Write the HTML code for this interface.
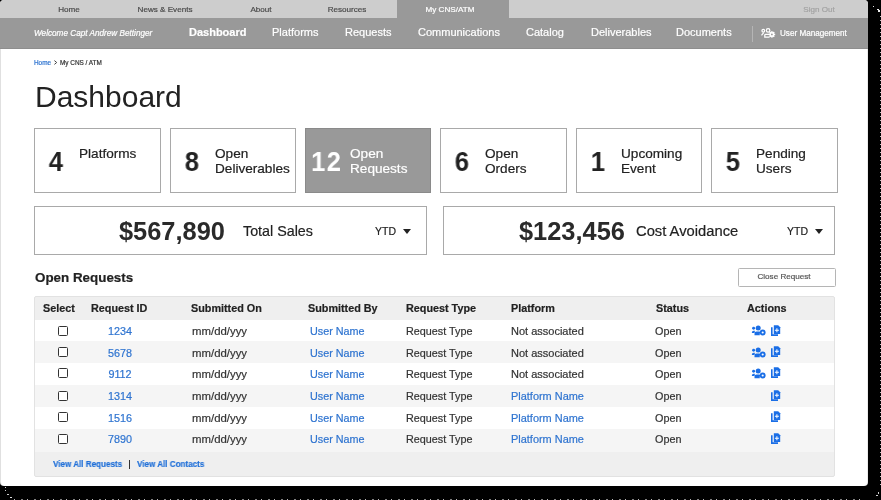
<!DOCTYPE html><html><head><meta charset="utf-8"><style>
html,body{margin:0;padding:0;width:881px;height:500px;overflow:hidden;background:#000}
.page{position:absolute;left:0;top:0;width:868px;height:486px;background:#fff;border-radius:4px;overflow:hidden;box-shadow:inset 1px 0 0 rgba(0,0,0,0.12),inset -1px 0 0 rgba(0,0,0,0.08);font-family:"Liberation Sans",sans-serif}
.t{position:absolute;white-space:nowrap;line-height:1;will-change:transform;-webkit-text-stroke:0.2px currentColor}
.nz{position:absolute}
</style></head><body>
<div class="nz" style="left:880px;top:16px;width:1px;height:470px;background:repeating-linear-gradient(180deg,rgba(255,255,255,0.75) 0 1px,transparent 1px 4px)"></div>
<div class="nz" style="left:14px;top:499px;width:850px;height:1px;background:repeating-linear-gradient(90deg,rgba(255,255,255,0.7) 0 1px,transparent 1px 7px,rgba(255,255,255,0.5) 7px 9px,transparent 9px 13px)"></div>
<div class="nz" style="left:873px;top:6px;width:1px;height:1px;background:#ddd"></div>
<div class="nz" style="left:877px;top:9px;width:2px;height:1px;background:#eee"></div>
<div class="nz" style="left:878px;top:10px;width:2px;height:2px;background:#eee"></div>
<div class="nz" style="left:5px;top:487px;width:1px;height:1px;background:#ddd"></div>
<div class="nz" style="left:5px;top:490px;width:1px;height:1px;background:#ccc"></div>
<div class="nz" style="left:7px;top:494px;width:2px;height:1px;background:#ccc"></div>
<div class="nz" style="left:10px;top:497px;width:2px;height:1px;background:#ddd"></div>
<div class="nz" style="left:876px;top:495px;width:2px;height:1px;background:#ccc"></div>
<div class="nz" style="left:878px;top:492px;width:1px;height:2px;background:#ccc"></div>
<div class="page">
<div style="position:absolute;left:0px;top:0px;width:868px;height:18px;background:#cdcdcd"></div>
<div style="position:absolute;left:396.5px;top:0px;width:112.5px;height:18px;background:#999"></div>
<div class="t" style="left:-130.6px;width:400px;text-align:center;top:6.00px;font-size:8.1px;color:#4a4a4a;font-weight:normal;font-style:normal;">Home</div>
<div class="t" style="left:-35.099999999999994px;width:400px;text-align:center;top:6.00px;font-size:8.1px;color:#4a4a4a;font-weight:normal;font-style:normal;">News &amp; Events</div>
<div class="t" style="left:61.30000000000001px;width:400px;text-align:center;top:6.00px;font-size:8.1px;color:#4a4a4a;font-weight:normal;font-style:normal;">About</div>
<div class="t" style="left:146.7px;width:400px;text-align:center;top:6.00px;font-size:8.1px;color:#4a4a4a;font-weight:normal;font-style:normal;">Resources</div>
<div class="t" style="left:250.2px;width:400px;text-align:center;top:6.00px;font-size:8.1px;color:#fff;font-weight:normal;font-style:normal;">My CNS/ATM</div>
<div class="t" style="left:618.8px;width:400px;text-align:center;top:6.00px;font-size:8.1px;color:#a2a2a2;font-weight:normal;font-style:normal;">Sign Out</div>
<div style="position:absolute;left:0px;top:18px;width:868px;height:30.5px;background:#999"></div>
<div style="position:absolute;left:0px;top:48px;width:868px;height:1px;background:#8e8e8e"></div>
<div class="t" style="left:33.6px;top:30.00px;font-size:8.2px;color:#fff;font-weight:normal;font-style:italic;">Welcome Capt Andrew Bettinger</div>
<div class="t" style="left:189.3px;top:27.00px;font-size:11px;color:#fff;font-weight:bold;font-style:normal;">Dashboard</div>
<div class="t" style="left:272.2px;top:27.00px;font-size:11px;color:#fff;font-weight:normal;font-style:normal;">Platforms</div>
<div class="t" style="left:345px;top:27.00px;font-size:11px;color:#fff;font-weight:normal;font-style:normal;">Requests</div>
<div class="t" style="left:417.8px;top:27.00px;font-size:11px;color:#fff;font-weight:normal;font-style:normal;">Communications</div>
<div class="t" style="left:526px;top:27.00px;font-size:11px;color:#fff;font-weight:normal;font-style:normal;">Catalog</div>
<div class="t" style="left:590.6px;top:27.00px;font-size:11px;color:#fff;font-weight:normal;font-style:normal;">Deliverables</div>
<div class="t" style="left:676.2px;top:27.00px;font-size:11px;color:#fff;font-weight:normal;font-style:normal;">Documents</div>
<div style="position:absolute;left:751.5px;top:26px;width:1px;height:16px;background:#b5b5b5"></div>
<div class="t" style="left:779.7px;top:30.00px;font-size:8.15px;color:#fff;font-weight:normal;font-style:normal;">User Management</div>
<svg style="position:absolute;left:761px;top:27px" width="15" height="12" viewBox="0 0 15 12"><g fill="none" stroke="#fff" stroke-width="1.25"><circle cx="2.3" cy="3.7" r="1.35"/><path d="M0.5 8.3 L2.7 5.7"/><circle cx="7.1" cy="3.4" r="1.75"/><path d="M8.4 7.4 H4.6 Q3.8 7.4 3.8 8.2 V10.2 H8.6"/></g><g fill="#fff"><circle cx="10.9" cy="7.4" r="2.5"/><rect x="10.2" y="4.1" width="1.4" height="6.6" /><rect x="7.6" y="6.7" width="6.6" height="1.4"/><rect x="10.2" y="4.1" width="1.4" height="6.6" transform="rotate(45 10.9 7.4)"/><rect x="10.2" y="4.1" width="1.4" height="6.6" transform="rotate(-45 10.9 7.4)"/></g><circle cx="10.9" cy="7.4" r="0.9" fill="#999"/></svg>
<div class="t" style="left:34px;top:60.00px;font-size:6.4px;color:#2f74d0;font-weight:normal;font-style:normal;">Home</div>
<svg style="position:absolute;left:53px;top:59px" width="6" height="7" viewBox="0 0 6 7"><path d="M1.4 1.6 L3.7 3.5 L1.4 5.4" fill="none" stroke="#444" stroke-width="1"/></svg>
<div class="t" style="left:60px;top:60.00px;font-size:6.4px;color:#333;font-weight:normal;font-style:normal;">My CNS / ATM</div>
<div class="t" style="left:35px;top:82.00px;font-size:30px;color:#222;font-weight:normal;font-style:normal;-webkit-text-stroke:0;">Dashboard</div>
<div style="position:absolute;left:34px;top:128px;width:127px;height:65px;box-sizing:border-box;border:1px solid #a9a9a9;background:#fff"></div>
<div class="t" style="left:-144.5px;width:400px;text-align:center;top:148.00px;font-size:27.5px;color:#222;font-weight:bold;font-style:normal;transform:scaleX(0.93);-webkit-text-stroke:0;">4</div>
<div class="t" style="left:79.3px;top:147.00px;font-size:13.6px;color:#222;font-weight:normal;font-style:normal;">Platforms</div>
<div style="position:absolute;left:170px;top:128px;width:126px;height:65px;box-sizing:border-box;border:1px solid #a9a9a9;background:#fff"></div>
<div class="t" style="left:-8.5px;width:400px;text-align:center;top:148.00px;font-size:27.5px;color:#222;font-weight:bold;font-style:normal;transform:scaleX(0.93);-webkit-text-stroke:0;">8</div>
<div class="t" style="left:215.3px;top:147.00px;font-size:13.6px;color:#222;font-weight:normal;font-style:normal;">Open</div>
<div class="t" style="left:215.3px;top:162.00px;font-size:13.6px;color:#222;font-weight:normal;font-style:normal;">Deliverables</div>
<div style="position:absolute;left:305px;top:128px;width:126px;height:65px;box-sizing:border-box;border:1px solid #8a8a8a;background:#999"></div>
<div class="t" style="left:125.60000000000002px;width:400px;text-align:center;top:148.00px;font-size:27.5px;color:#fff;font-weight:bold;font-style:normal;transform:scaleX(0.93);letter-spacing:1.3px;text-indent:1.3px;-webkit-text-stroke:0;">12</div>
<div class="t" style="left:350.3px;top:147.00px;font-size:13.6px;color:#fff;font-weight:normal;font-style:normal;">Open</div>
<div class="t" style="left:350.3px;top:162.00px;font-size:13.6px;color:#fff;font-weight:normal;font-style:normal;">Requests</div>
<div style="position:absolute;left:440px;top:128px;width:127px;height:65px;box-sizing:border-box;border:1px solid #a9a9a9;background:#fff"></div>
<div class="t" style="left:261.5px;width:400px;text-align:center;top:148.00px;font-size:27.5px;color:#222;font-weight:bold;font-style:normal;transform:scaleX(0.93);-webkit-text-stroke:0;">6</div>
<div class="t" style="left:485.3px;top:147.00px;font-size:13.6px;color:#222;font-weight:normal;font-style:normal;">Open</div>
<div class="t" style="left:485.3px;top:162.00px;font-size:13.6px;color:#222;font-weight:normal;font-style:normal;">Orders</div>
<div style="position:absolute;left:576px;top:128px;width:126px;height:65px;box-sizing:border-box;border:1px solid #a9a9a9;background:#fff"></div>
<div class="t" style="left:397.5px;width:400px;text-align:center;top:148.00px;font-size:27.5px;color:#222;font-weight:bold;font-style:normal;transform:scaleX(0.93);-webkit-text-stroke:0;">1</div>
<div class="t" style="left:621.3px;top:147.00px;font-size:13.6px;color:#222;font-weight:normal;font-style:normal;">Upcoming</div>
<div class="t" style="left:621.3px;top:162.00px;font-size:13.6px;color:#222;font-weight:normal;font-style:normal;">Event</div>
<div style="position:absolute;left:711px;top:128px;width:127px;height:65px;box-sizing:border-box;border:1px solid #a9a9a9;background:#fff"></div>
<div class="t" style="left:532.5px;width:400px;text-align:center;top:148.00px;font-size:27.5px;color:#222;font-weight:bold;font-style:normal;transform:scaleX(0.93);-webkit-text-stroke:0;">5</div>
<div class="t" style="left:756.3px;top:147.00px;font-size:13.6px;color:#222;font-weight:normal;font-style:normal;">Pending</div>
<div class="t" style="left:756.3px;top:162.00px;font-size:13.6px;color:#222;font-weight:normal;font-style:normal;">Users</div>
<div style="position:absolute;left:34px;top:206px;width:393px;height:48.5px;box-sizing:border-box;border:1px solid #a9a9a9;background:#fff"></div>
<div class="t" style="left:118.6px;top:219.00px;font-size:25.4px;color:#2a2a2a;font-weight:bold;font-style:normal;-webkit-text-stroke:0;">$567,890</div>
<div class="t" style="left:243px;top:224.00px;font-size:14.3px;color:#222;font-weight:normal;font-style:normal;">Total Sales</div>
<div class="t" style="left:375.1px;top:226.00px;font-size:10.5px;color:#222;font-weight:normal;font-style:normal;">YTD</div>
<div style="position:absolute;left:403px;top:229px;width:0;height:0;border-left:4.2px solid transparent;border-right:4.2px solid transparent;border-top:5px solid #222"></div>
<div style="position:absolute;left:443px;top:206px;width:392px;height:48.5px;box-sizing:border-box;border:1px solid #a9a9a9;background:#fff"></div>
<div class="t" style="left:518.7px;top:219.00px;font-size:25.4px;color:#2a2a2a;font-weight:bold;font-style:normal;-webkit-text-stroke:0;">$123,456</div>
<div class="t" style="left:636.4px;top:224.00px;font-size:14.75px;color:#222;font-weight:normal;font-style:normal;">Cost Avoidance</div>
<div class="t" style="left:787.3px;top:226.00px;font-size:10.5px;color:#222;font-weight:normal;font-style:normal;">YTD</div>
<div style="position:absolute;left:814.8px;top:229px;width:0;height:0;border-left:4.2px solid transparent;border-right:4.2px solid transparent;border-top:5px solid #222"></div>
<div class="t" style="left:34.9px;top:271.00px;font-size:13.4px;color:#222;font-weight:bold;font-style:normal;">Open Requests</div>
<div style="position:absolute;left:738px;top:268px;width:98px;height:18.5px;box-sizing:border-box;border:1px solid #b5b5b5;border-radius:1.5px;background:#fff"></div>
<div class="t" style="left:584.3px;width:400px;text-align:center;top:273.00px;font-size:8.1px;color:#555;font-weight:normal;font-style:normal;">Close Request</div>
<div style="position:absolute;left:34px;top:296px;width:801px;height:181px;box-sizing:border-box;border:1px solid #e2e2e2;border-radius:2px;background:#efefef"></div>
<div class="t" style="left:43.4px;top:303.00px;font-size:10.8px;color:#222;font-weight:bold;font-style:normal;">Select</div>
<div class="t" style="left:90.7px;top:303.00px;font-size:10.8px;color:#222;font-weight:bold;font-style:normal;">Request ID</div>
<div class="t" style="left:190.5px;top:303.00px;font-size:10.8px;color:#222;font-weight:bold;font-style:normal;">Submitted On</div>
<div class="t" style="left:307.8px;top:303.00px;font-size:10.8px;color:#222;font-weight:bold;font-style:normal;">Submitted By</div>
<div class="t" style="left:405.5px;top:303.00px;font-size:10.8px;color:#222;font-weight:bold;font-style:normal;">Request Type</div>
<div class="t" style="left:511.1px;top:303.00px;font-size:10.8px;color:#222;font-weight:bold;font-style:normal;">Platform</div>
<div class="t" style="left:655.5px;top:303.00px;font-size:10.8px;color:#222;font-weight:bold;font-style:normal;">Status</div>
<div class="t" style="left:747.4px;top:303.00px;font-size:10.8px;color:#222;font-weight:bold;font-style:normal;">Actions</div>
<div style="position:absolute;left:35px;top:320px;width:799px;height:21px;background:#fff"></div>
<div style="position:absolute;left:57.6px;top:326.0px;width:10px;height:10px;box-sizing:border-box;border:1.5px solid #333;border-radius:1.5px;background:#fff"></div>
<div class="t" style="left:-80.5px;width:400px;text-align:center;top:326.00px;font-size:10.8px;color:#2f74d0;font-weight:normal;font-style:normal;">1234</div>
<div class="t" style="left:191.7px;top:326.00px;font-size:11.4px;color:#333;font-weight:normal;font-style:normal;">mm/dd/yyy</div>
<div class="t" style="left:310.3px;top:326.00px;font-size:10.8px;color:#2f74d0;font-weight:normal;font-style:normal;">User Name</div>
<div class="t" style="left:406.2px;top:326.00px;font-size:10.8px;color:#333;font-weight:normal;font-style:normal;">Request Type</div>
<div class="t" style="left:510.9px;top:326.00px;font-size:11px;color:#333;font-weight:normal;font-style:normal;">Not associated</div>
<div class="t" style="left:655px;top:326.00px;font-size:10.8px;color:#333;font-weight:normal;font-style:normal;">Open</div>
<svg style="position:absolute;left:751px;top:325.3px" width="16" height="12" viewBox="0 0 16 12"><g fill="#1a6ee6"><circle cx="2.6" cy="3.3" r="1.45"/><path d="M0.9 7.6 Q0.9 5.7 2.6 5.7 H3.9 L3.6 8 H0.9Z"/><circle cx="7.2" cy="2.9" r="2.5"/><path d="M3.5 10.3 V8.4 Q3.5 6.6 5.5 6.6 H8.2 Q9.3 6.6 9.2 7.5 Q8.5 8.6 8.8 10.3Z"/><circle cx="11.7" cy="7.5" r="2.9"/></g><circle cx="11.7" cy="7.5" r="1.05" fill="#fff"/></svg>
<svg style="position:absolute;left:770px;top:325.0px" width="12" height="12" viewBox="0 0 12 12"><g fill="#1a6ee6"><path d="M1 2.2 H2.6 V9.3 H8 V11 H1Z"/><path d="M3.8 0.2 H8.2 L10.2 2.2 V9 H3.8Z"/></g><path d="M6.4 3.3 H7.4 V4.8 H8.9 V5.8 H7.4 V7.3 H6.4 V5.8 H4.9 V4.8 H6.4Z" fill="#fff"/></svg>
<div style="position:absolute;left:35px;top:341px;width:799px;height:22px;background:#f5f5f5"></div>
<div style="position:absolute;left:57.6px;top:347.4px;width:10px;height:10px;box-sizing:border-box;border:1.5px solid #333;border-radius:1.5px;background:#fff"></div>
<div class="t" style="left:-80.5px;width:400px;text-align:center;top:348.00px;font-size:10.8px;color:#2f74d0;font-weight:normal;font-style:normal;">5678</div>
<div class="t" style="left:191.7px;top:348.00px;font-size:11.4px;color:#333;font-weight:normal;font-style:normal;">mm/dd/yyy</div>
<div class="t" style="left:310.3px;top:348.00px;font-size:10.8px;color:#2f74d0;font-weight:normal;font-style:normal;">User Name</div>
<div class="t" style="left:406.2px;top:348.00px;font-size:10.8px;color:#333;font-weight:normal;font-style:normal;">Request Type</div>
<div class="t" style="left:510.9px;top:348.00px;font-size:11px;color:#333;font-weight:normal;font-style:normal;">Not associated</div>
<div class="t" style="left:655px;top:348.00px;font-size:10.8px;color:#333;font-weight:normal;font-style:normal;">Open</div>
<svg style="position:absolute;left:751px;top:346.7px" width="16" height="12" viewBox="0 0 16 12"><g fill="#1a6ee6"><circle cx="2.6" cy="3.3" r="1.45"/><path d="M0.9 7.6 Q0.9 5.7 2.6 5.7 H3.9 L3.6 8 H0.9Z"/><circle cx="7.2" cy="2.9" r="2.5"/><path d="M3.5 10.3 V8.4 Q3.5 6.6 5.5 6.6 H8.2 Q9.3 6.6 9.2 7.5 Q8.5 8.6 8.8 10.3Z"/><circle cx="11.7" cy="7.5" r="2.9"/></g><circle cx="11.7" cy="7.5" r="1.05" fill="#fff"/></svg>
<svg style="position:absolute;left:770px;top:346.4px" width="12" height="12" viewBox="0 0 12 12"><g fill="#1a6ee6"><path d="M1 2.2 H2.6 V9.3 H8 V11 H1Z"/><path d="M3.8 0.2 H8.2 L10.2 2.2 V9 H3.8Z"/></g><path d="M6.4 3.3 H7.4 V4.8 H8.9 V5.8 H7.4 V7.3 H6.4 V5.8 H4.9 V4.8 H6.4Z" fill="#fff"/></svg>
<div style="position:absolute;left:35px;top:363px;width:799px;height:22px;background:#fff"></div>
<div style="position:absolute;left:57.6px;top:368.4px;width:10px;height:10px;box-sizing:border-box;border:1.5px solid #333;border-radius:1.5px;background:#fff"></div>
<div class="t" style="left:-80.5px;width:400px;text-align:center;top:369.00px;font-size:10.8px;color:#2f74d0;font-weight:normal;font-style:normal;">9112</div>
<div class="t" style="left:191.7px;top:369.00px;font-size:11.4px;color:#333;font-weight:normal;font-style:normal;">mm/dd/yyy</div>
<div class="t" style="left:310.3px;top:369.00px;font-size:10.8px;color:#2f74d0;font-weight:normal;font-style:normal;">User Name</div>
<div class="t" style="left:406.2px;top:369.00px;font-size:10.8px;color:#333;font-weight:normal;font-style:normal;">Request Type</div>
<div class="t" style="left:510.9px;top:369.00px;font-size:11px;color:#333;font-weight:normal;font-style:normal;">Not associated</div>
<div class="t" style="left:655px;top:369.00px;font-size:10.8px;color:#333;font-weight:normal;font-style:normal;">Open</div>
<svg style="position:absolute;left:751px;top:367.7px" width="16" height="12" viewBox="0 0 16 12"><g fill="#1a6ee6"><circle cx="2.6" cy="3.3" r="1.45"/><path d="M0.9 7.6 Q0.9 5.7 2.6 5.7 H3.9 L3.6 8 H0.9Z"/><circle cx="7.2" cy="2.9" r="2.5"/><path d="M3.5 10.3 V8.4 Q3.5 6.6 5.5 6.6 H8.2 Q9.3 6.6 9.2 7.5 Q8.5 8.6 8.8 10.3Z"/><circle cx="11.7" cy="7.5" r="2.9"/></g><circle cx="11.7" cy="7.5" r="1.05" fill="#fff"/></svg>
<svg style="position:absolute;left:770px;top:367.4px" width="12" height="12" viewBox="0 0 12 12"><g fill="#1a6ee6"><path d="M1 2.2 H2.6 V9.3 H8 V11 H1Z"/><path d="M3.8 0.2 H8.2 L10.2 2.2 V9 H3.8Z"/></g><path d="M6.4 3.3 H7.4 V4.8 H8.9 V5.8 H7.4 V7.3 H6.4 V5.8 H4.9 V4.8 H6.4Z" fill="#fff"/></svg>
<div style="position:absolute;left:35px;top:385px;width:799px;height:22px;background:#f5f5f5"></div>
<div style="position:absolute;left:57.6px;top:391.0px;width:10px;height:10px;box-sizing:border-box;border:1.5px solid #333;border-radius:1.5px;background:#fff"></div>
<div class="t" style="left:-80.5px;width:400px;text-align:center;top:391.00px;font-size:10.8px;color:#2f74d0;font-weight:normal;font-style:normal;">1314</div>
<div class="t" style="left:191.7px;top:391.00px;font-size:11.4px;color:#333;font-weight:normal;font-style:normal;">mm/dd/yyy</div>
<div class="t" style="left:310.3px;top:391.00px;font-size:10.8px;color:#2f74d0;font-weight:normal;font-style:normal;">User Name</div>
<div class="t" style="left:406.2px;top:391.00px;font-size:10.8px;color:#333;font-weight:normal;font-style:normal;">Request Type</div>
<div class="t" style="left:510.9px;top:391.00px;font-size:10.95px;color:#2f74d0;font-weight:normal;font-style:normal;">Platform Name</div>
<div class="t" style="left:655px;top:391.00px;font-size:10.8px;color:#333;font-weight:normal;font-style:normal;">Open</div>
<svg style="position:absolute;left:770px;top:390.0px" width="12" height="12" viewBox="0 0 12 12"><g fill="#1a6ee6"><path d="M1 2.2 H2.6 V9.3 H8 V11 H1Z"/><path d="M3.8 0.2 H8.2 L10.2 2.2 V9 H3.8Z"/></g><path d="M6.4 3.3 H7.4 V4.8 H8.9 V5.8 H7.4 V7.3 H6.4 V5.8 H4.9 V4.8 H6.4Z" fill="#fff"/></svg>
<div style="position:absolute;left:35px;top:407px;width:799px;height:22px;background:#fff"></div>
<div style="position:absolute;left:57.6px;top:412.4px;width:10px;height:10px;box-sizing:border-box;border:1.5px solid #333;border-radius:1.5px;background:#fff"></div>
<div class="t" style="left:-80.5px;width:400px;text-align:center;top:413.00px;font-size:10.8px;color:#2f74d0;font-weight:normal;font-style:normal;">1516</div>
<div class="t" style="left:191.7px;top:413.00px;font-size:11.4px;color:#333;font-weight:normal;font-style:normal;">mm/dd/yyy</div>
<div class="t" style="left:310.3px;top:413.00px;font-size:10.8px;color:#2f74d0;font-weight:normal;font-style:normal;">User Name</div>
<div class="t" style="left:406.2px;top:413.00px;font-size:10.8px;color:#333;font-weight:normal;font-style:normal;">Request Type</div>
<div class="t" style="left:510.9px;top:413.00px;font-size:10.95px;color:#2f74d0;font-weight:normal;font-style:normal;">Platform Name</div>
<div class="t" style="left:655px;top:413.00px;font-size:10.8px;color:#333;font-weight:normal;font-style:normal;">Open</div>
<svg style="position:absolute;left:770px;top:411.4px" width="12" height="12" viewBox="0 0 12 12"><g fill="#1a6ee6"><path d="M1 2.2 H2.6 V9.3 H8 V11 H1Z"/><path d="M3.8 0.2 H8.2 L10.2 2.2 V9 H3.8Z"/></g><path d="M6.4 3.3 H7.4 V4.8 H8.9 V5.8 H7.4 V7.3 H6.4 V5.8 H4.9 V4.8 H6.4Z" fill="#fff"/></svg>
<div style="position:absolute;left:35px;top:429px;width:799px;height:23px;background:#f5f5f5"></div>
<div style="position:absolute;left:57.6px;top:433.9px;width:10px;height:10px;box-sizing:border-box;border:1.5px solid #333;border-radius:1.5px;background:#fff"></div>
<div class="t" style="left:-80.5px;width:400px;text-align:center;top:434.00px;font-size:10.8px;color:#2f74d0;font-weight:normal;font-style:normal;">7890</div>
<div class="t" style="left:191.7px;top:434.00px;font-size:11.4px;color:#333;font-weight:normal;font-style:normal;">mm/dd/yyy</div>
<div class="t" style="left:310.3px;top:434.00px;font-size:10.8px;color:#2f74d0;font-weight:normal;font-style:normal;">User Name</div>
<div class="t" style="left:406.2px;top:434.00px;font-size:10.8px;color:#333;font-weight:normal;font-style:normal;">Request Type</div>
<div class="t" style="left:510.9px;top:434.00px;font-size:10.95px;color:#2f74d0;font-weight:normal;font-style:normal;">Platform Name</div>
<div class="t" style="left:655px;top:434.00px;font-size:10.8px;color:#333;font-weight:normal;font-style:normal;">Open</div>
<svg style="position:absolute;left:770px;top:432.9px" width="12" height="12" viewBox="0 0 12 12"><g fill="#1a6ee6"><path d="M1 2.2 H2.6 V9.3 H8 V11 H1Z"/><path d="M3.8 0.2 H8.2 L10.2 2.2 V9 H3.8Z"/></g><path d="M6.4 3.3 H7.4 V4.8 H8.9 V5.8 H7.4 V7.3 H6.4 V5.8 H4.9 V4.8 H6.4Z" fill="#fff"/></svg>
<div class="t" style="left:52.7px;top:460.00px;font-size:8.9px;color:#1f6fd8;font-weight:bold;font-style:normal;transform:scaleX(0.91);transform-origin:0 0;">View All Requests</div>
<div style="position:absolute;left:129px;top:460.3px;width:1.1px;height:8.5px;background:#333"></div>
<div class="t" style="left:137.2px;top:460.00px;font-size:8.9px;color:#1f6fd8;font-weight:bold;font-style:normal;transform:scaleX(0.91);transform-origin:0 0;">View All Contacts</div>
</div></body></html>
